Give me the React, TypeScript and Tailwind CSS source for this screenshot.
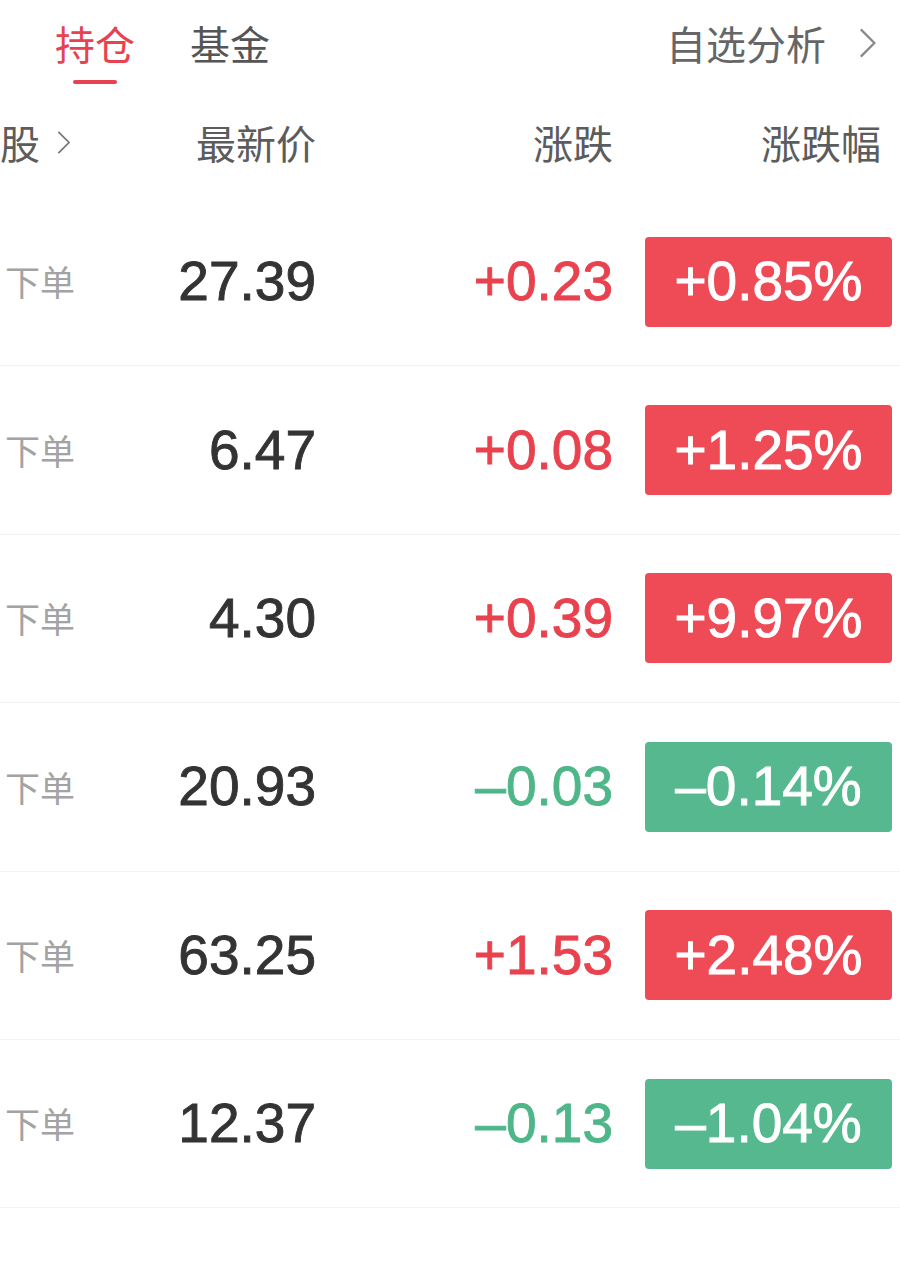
import React from "react";

type Quote = {
  price: string;
  change: string;
  percent: string;
  up: boolean;
};

const quotes: Quote[] = [
  { price: "27.39", change: "+0.23", percent: "+0.85%", up: true },
  { price: "6.47", change: "+0.08", percent: "+1.25%", up: true },
  { price: "4.30", change: "+0.39", percent: "+9.97%", up: true },
  { price: "20.93", change: "–0.03", percent: "–0.14%", up: false },
  { price: "63.25", change: "+1.53", percent: "+2.48%", up: true },
  { price: "12.37", change: "–0.13", percent: "–1.04%", up: false },
];

const cjk = "font-['Noto_Sans_CJK_SC',sans-serif]";
const num =
  "font-['Liberation_Sans','Noto_Sans_CJK_SC',sans-serif] [-webkit-text-stroke:0.9px_currentcolor]";

const Chevron = ({ className }: { className: string }) => (
  <svg viewBox="0 0 12 20" className={className} fill="none">
    <path d="M1.5 1.5 L10 10 L1.5 18.5" stroke="currentColor" strokeWidth="1.4" />
  </svg>
);

const QuoteRow = ({ q }: { q: Quote }) => (
  <div className="flex h-[168.4px] items-center border-b border-[#f3f3f3]">
    <div className={`w-[120px] pl-[5px] text-[35px] text-[#a3a3a3] ${cjk}`}>下单</div>
    <div className={`w-[196px] text-right text-[55px] leading-none text-[#333333] ${num}`}>
      {q.price}
    </div>
    <div
      className={`w-[297px] text-right text-[55px] leading-none ${num} ${
        q.up ? "text-[#e9424f]" : "text-[#4fb689]"
      }`}
    >
      {q.change}
    </div>
    <div
      className={`ml-[32px] flex h-[90px] w-[247px] items-center justify-center rounded-[4px] text-[55px] leading-none text-white ${num} ${
        q.up ? "bg-[#ef4b57]" : "bg-[#55b88e]"
      }`}
    >
      {q.percent}
    </div>
  </div>
);

export default function App() {
  return (
    <div className="h-[1284px] w-[900px] overflow-hidden bg-white">
      <div className={`flex h-[100px] items-start ${cjk}`}>
        <div className="ml-[55px] flex flex-col items-center pt-[18px]">
          <span className="text-[40px] leading-[50px] text-[#e8414f]">持仓</span>
          <span className="mt-[12px] h-[4px] w-[44px] rounded-full bg-[#e8414f]" />
        </div>
        <span className="ml-[55px] pt-[18px] text-[40px] leading-[50px] text-[#555555]">基金</span>
        <div className="ml-auto mr-[22px] flex items-center pt-[18px] text-[#666666]">
          <span className="text-[40px] leading-[50px]">自选分析</span>
          <Chevron className="ml-[32px] h-[32px] w-[20px] text-[#888888]" />
        </div>
      </div>
      <div className={`flex h-[98px] items-center pb-[14px] text-[40px] text-[#5c5c5c] ${cjk}`}>
        <div className="flex w-[120px] items-center">
          <span>股</span>
          <Chevron className="ml-[16px] h-[25px] w-[16px] text-[#777777]" />
        </div>
        <div className="w-[196px] text-right">最新价</div>
        <div className="w-[297px] text-right">涨跌</div>
        <div className="ml-[32px] w-[247px] pr-[11px] text-right">涨跌幅</div>
      </div>
      {quotes.map((q, i) => (
        <QuoteRow key={i} q={q} />
      ))}
    </div>
  );
}
